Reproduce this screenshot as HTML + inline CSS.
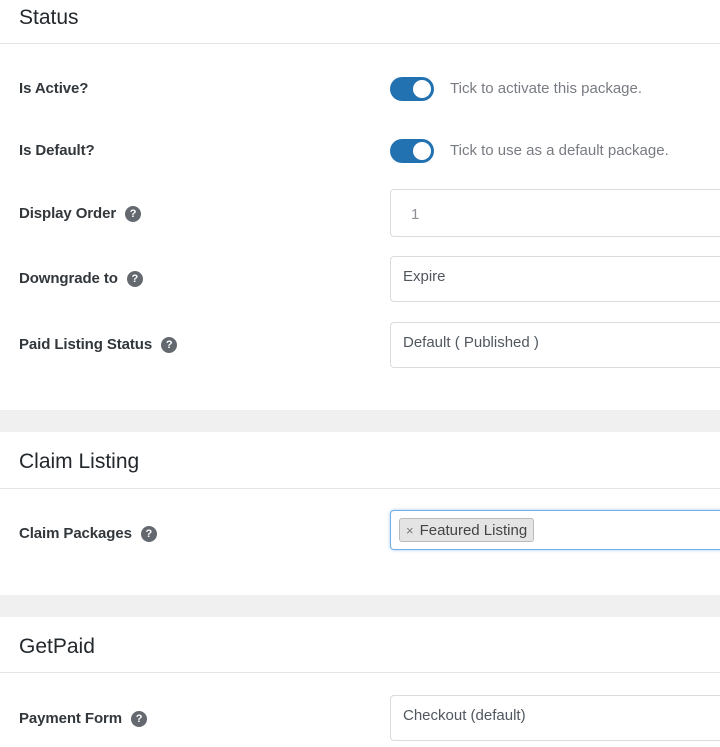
<!DOCTYPE html>
<html><head><style>
*{margin:0;padding:0;box-sizing:border-box}
body{width:720px;height:747px;background:#f0f0f1;font-family:"Liberation Sans",sans-serif;overflow:hidden;position:relative;color:#23282d}
.sec{position:absolute;left:0;width:720px;background:#fff}
.h{position:absolute;left:19px;font-size:21px;color:#23282d}
.line{position:absolute;left:0;width:720px;height:1px;background:#e2e4e7}
.lab{position:absolute;left:19px;font-size:15px;font-weight:bold;color:#32373c;letter-spacing:-0.1px}
.q{display:inline-block;width:16px;height:16px;border-radius:50%;background:#646970;color:#fff;font-size:11px;text-align:center;line-height:16px;vertical-align:1px;margin-left:9px}
.box{position:absolute;left:390px;width:340px;border:1px solid #dcdcde;border-radius:4px;background:#fff;font-size:15px;color:#50575e;padding-left:12px}
.tog{position:absolute;left:390px;width:44px;height:24px;border-radius:12px;background:#2271b1}
.tog:after{content:"";position:absolute;right:3px;top:3px;width:18px;height:18px;border-radius:50%;background:#fff}
.desc{position:absolute;left:450px;font-size:15px;color:#787c82}
</style></head><body>
<div class="sec" style="top:0;height:410px">
<div class="h" style="top:6px">Status</div>
<div class="line" style="top:43px"></div>
<div class="lab" style="top:80px">Is Active?</div>
<div class="tog" style="top:77px"></div><div class="desc" style="top:80px">Tick to activate this package.</div>
<div class="lab" style="top:142px">Is Default?</div>
<div class="tog" style="top:139px"></div><div class="desc" style="top:142px">Tick to use as a default package.</div>
<div class="lab" style="top:205px">Display Order<span class="q">?</span></div>
<div class="box" style="top:189px;height:48px;line-height:50px;color:#8c8f94;padding-left:20px">1</div>
<div class="lab" style="top:270px">Downgrade to<span class="q">?</span></div>
<div class="box" style="top:256px;height:46px;padding-top:11px">Expire</div>
<div class="lab" style="top:336px">Paid Listing Status<span class="q">?</span></div>
<div class="box" style="top:322px;height:46px;padding-top:11px">Default ( Published )</div>
</div>
<div class="sec" style="top:432px;height:163px">
<div class="h" style="top:18px">Claim Listing</div>
<div class="line" style="top:56px"></div>
<div class="lab" style="top:93px">Claim Packages<span class="q">?</span></div>
<div class="box" style="top:78px;height:40px;border-color:#72aee6;box-shadow:0 0 3px #9ecbf0;padding-left:8px">
<span style="display:inline-block;margin-top:7px;border:1px solid #bbb;border-radius:3px;background:#e4e4e4;padding:3px 6px 2px;font-size:15px;color:#444"><span style="color:#777;font-size:13px;margin-right:6px">×</span>Featured Listing</span></div>
</div>
<div class="sec" style="top:617px;height:130px">
<div class="h" style="top:18px">GetPaid</div>
<div class="line" style="top:55px"></div>
<div class="lab" style="top:93px">Payment Form<span class="q">?</span></div>
<div class="box" style="top:78px;height:46px;padding-top:11px">Checkout (default)</div>
</div>
</body></html>
